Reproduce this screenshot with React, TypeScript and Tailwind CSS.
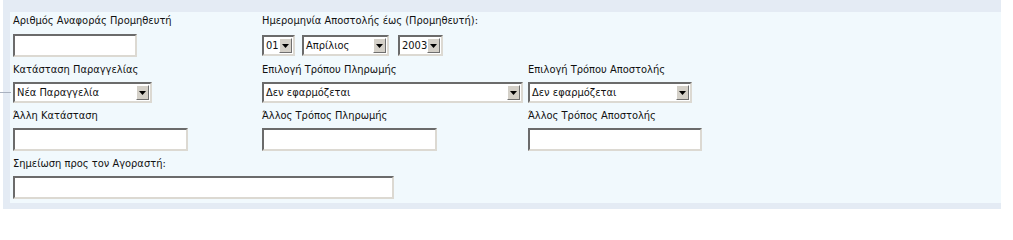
import React from "react";

const ff = "[font-family:'DejaVu_Sans_Condensed','DejaVu_Sans',sans-serif] [font-stretch:condensed] text-[11px] text-[#111]";

function ArrowButton() {
  return (
    <span className="flex h-[15px] w-[13px] shrink-0 items-center justify-center border border-t-white border-l-white border-b-[#6f6f6f] border-r-[#6f6f6f] bg-[#d4d0c8] mr-[1px]">
      <svg width="7" height="4" viewBox="0 0 7 4">
        <path d="M0 0h7L3.5 4z" fill="#000" />
      </svg>
    </span>
  );
}

function Select({ value, w }: { value: string; w: string }) {
  return (
    <div
      className={`flex h-[21px] ${w} items-center border-2 border-t-[#6b6b6b] border-l-[#6b6b6b] border-b-[#dcd9d2] border-r-[#dcd9d2] bg-white`}
    >
      <span className={`min-w-0 flex-1 overflow-hidden whitespace-nowrap pl-[2px] leading-[15px] ${ff}`}>{value}</span>
      <ArrowButton />
    </div>
  );
}

function Input({ w }: { w: string }) {
  return (
    <input
      type="text"
      className={`block h-[23px] ${w} border-2 border-t-[#6b6b6b] border-l-[#6b6b6b] border-b-[#dcd9d2] border-r-[#dcd9d2] bg-white outline-none`}
    />
  );
}

function Label({ children }: { children: React.ReactNode }) {
  return <div className={`h-[16px] leading-[16px] whitespace-nowrap ${ff}`}>{children}</div>;
}

export default function App() {
  return (
    <div className="relative h-[216px] w-[1013px] bg-white">
      <div className="absolute left-0 top-[92px] h-px w-[11px] bg-[#a9b1bf]" />
      <div className="ml-[3px] w-[998px] bg-[#e4ebf4] pl-[7px] pt-[12px] pb-[6px]">
        <div className="bg-[#f1f9fd] pl-[3px] pt-[1px] pb-[4px]">
          {/* row 1 */}
          <div className="grid grid-cols-[249px_266px_1fr]">
            <div>
              <Label>Αριθμός Αναφοράς Προμηθευτή</Label>
              <div className="mt-[5px]">
                <Input w="w-[124px]" />
              </div>
            </div>
            <div>
              <Label>Ημερομηνία Αποστολής έως (Προμηθευτή):</Label>
              <div className="mt-[6px] flex">
                <Select value="01" w="w-[33px]" />
                <div className="ml-[7px]">
                  <Select value="Απρίλιος" w="w-[87px]" />
                </div>
                <div className="ml-[9px]">
                  <Select value="2003" w="w-[45px]" />
                </div>
              </div>
            </div>
            <div />
          </div>

          {/* row 2 */}
          <div className="mt-[5px] grid grid-cols-[249px_266px_1fr]">
            <div>
              <Label>Κατάσταση Παραγγελίας</Label>
              <div className="mt-[4px]">
                <Select value="Νέα Παραγγελία" w="w-[139px]" />
              </div>
            </div>
            <div>
              <Label>Επιλογή Τρόπου Πληρωμής</Label>
              <div className="mt-[4px]">
                <Select value="Δεν εφαρμόζεται" w="w-[261px]" />
              </div>
            </div>
            <div>
              <Label>Επιλογή Τρόπου Αποστολής</Label>
              <div className="mt-[4px]">
                <Select value="Δεν εφαρμόζεται" w="w-[164px]" />
              </div>
            </div>
          </div>

          {/* row 3 */}
          <div className="mt-[5px] grid grid-cols-[249px_266px_1fr]">
            <div>
              <Label>Άλλη Κατάσταση</Label>
              <div className="mt-[4px]">
                <Input w="w-[175px]" />
              </div>
            </div>
            <div>
              <Label>Άλλος Τρόπος Πληρωμής</Label>
              <div className="mt-[4px]">
                <Input w="w-[175px]" />
              </div>
            </div>
            <div>
              <Label>Άλλος Τρόπος Αποστολής</Label>
              <div className="mt-[4px]">
                <Input w="w-[174px]" />
              </div>
            </div>
          </div>

          {/* row 4 */}
          <div className="mt-[5px]">
            <Label>Σημείωση προς τον Αγοραστή:</Label>
            <div className="mt-[4px]">
              <Input w="w-[381px]" />
            </div>
          </div>
        </div>
      </div>
    </div>
  );
}
